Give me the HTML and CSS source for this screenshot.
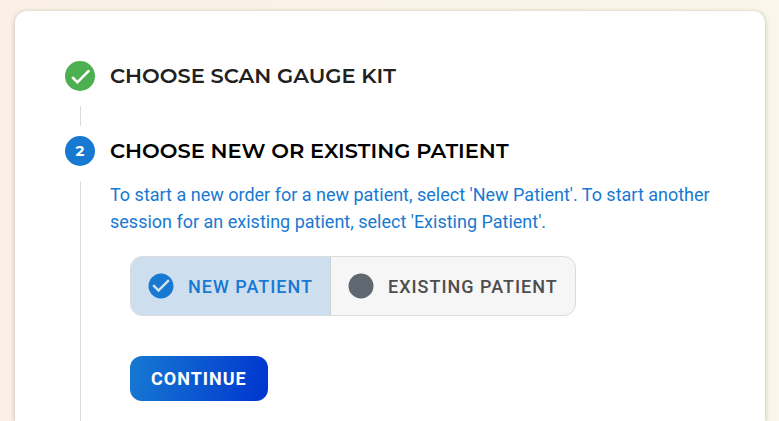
FILE: index.html
```html
<!DOCTYPE html>
<html lang="en">
<head>
    <meta charset="UTF-8">
    <meta name="viewport" content="width=device-width, initial-scale=1.0">
    <title>New Order</title>
    <link rel="stylesheet" href="styles.css">
</head>
<body>
    <main class="stepper">
        <div class="step">
            <span class="step-circle complete">
                <svg class="step-check" viewBox="0 0 24 24" aria-hidden="true">
                    <path d="M21,7L9,19L3.5,13.5L4.91,12.09L9,16.17L19.59,5.59L21,7Z"/>
                </svg>
            </span>
            <h2 class="step-title">CHOOSE SCAN GAUGE KIT</h2>
        </div>
        <div class="step-line"></div>

        <div class="step">
            <span class="step-circle">2</span>
            <h2 class="step-title active">CHOOSE NEW OR EXISTING PATIENT</h2>
        </div>
        <div class="step-content">
            <p class="hint">To start a new order for a new patient, select 'New Patient'. To start another session for an existing patient, select 'Existing Patient'.</p>
            <div class="actions">
                <div class="toggle" role="group" aria-label="Patient type">
                    <button type="button" class="toggle-btn selected" aria-pressed="true">
                        <svg class="toggle-icon" viewBox="0 0 24 24" aria-hidden="true">
                            <path d="M12 2C6.5 2 2 6.5 2 12S6.5 22 12 22 22 17.5 22 12 17.5 2 12 2M10 17L5 12L6.41 10.59L10 14.17L17.59 6.58L19 8L10 17Z"/>
                        </svg>
                        NEW PATIENT
                    </button>
                    <button type="button" class="toggle-btn" aria-pressed="false">
                        <svg class="toggle-icon" viewBox="0 0 24 24" aria-hidden="true">
                            <circle cx="12" cy="12" r="10"/>
                        </svg>
                        EXISTING PATIENT
                    </button>
                </div>
                <button type="button" class="continue-btn">CONTINUE</button>
            </div>
        </div>
    </main>
</body>
</html>
```
FILE: styles.css
```css
* {
    box-sizing: border-box;
}
body {
    margin: 0;
    padding: 11px 14px 0 15px;
    min-height: 100vh;
    font-family: Roboto, sans-serif;
    background: linear-gradient(90deg, #faf0e6, #faf6e9);
}
.stepper {
    padding: 50px 50px 0;
    background: white;
    border-radius: 12px 12px 0 0;
    box-shadow: 0 1px 5px rgba(0,0,0,0.25);
}
.step {
    display: flex;
    align-items: center;
    gap: 15px;
    height: 30px;
}
.step-circle {
    display: flex;
    align-items: center;
    justify-content: center;
    width: 30px;
    height: 30px;
    border-radius: 50%;
    background-color: #1779d2;
    color: white;
    font-family: Montserrat, Inter, sans-serif;
    font-size: 15px;
    font-weight: 700;
    line-height: 18px;
}
.step-circle.complete {
    background-color: #4caf50;
}
.step-check {
    width: 25px;
    height: 25px;
    fill: currentColor;
    stroke: currentColor;
    stroke-width: 0.6;
}
.step-title {
    margin: 0;
    font-family: Montserrat, Inter, sans-serif;
    font-size: 21px;
    font-weight: 600;
    line-height: 30px;
    color: #212121;
}
.step-title.active {
    color: black;
}
.step-line {
    height: 20px;
    margin: 15px 0 10px 15px;
    border-left: 1px solid #dcdcdc;
}
.step-content {
    margin: 15px 0 0 15px;
    padding: 0 0 20px 29px;
    border-left: 1px solid #dcdcdc;
}
.hint {
    margin: 0;
    font-size: 18px;
    line-height: 27px;
    color: #1779d2;
}
.actions {
    display: flex;
    flex-direction: column;
    align-items: flex-start;
    gap: 40px;
    padding: 21px 20px 0;
}
.toggle {
    display: flex;
    height: 60px;
    border: 1px solid #dcdcdc;
    border-radius: 12px;
    background-color: #f6f6f6;
    overflow: hidden;
}
.toggle-btn {
    display: flex;
    align-items: center;
    gap: 12px;
    padding: 0 17px 0 15px;
    border: none;
    background: none;
    color: #4d4d4d;
    font-family: inherit;
    font-size: 18px;
    font-weight: 500;
    letter-spacing: 1px;
    cursor: pointer;
}
.toggle-btn.selected {
    border-right: 1px solid #d0d4d8;
    background-color: #cddeee;
    color: #1779d2;
}
.toggle-icon {
    width: 30px;
    height: 30px;
    fill: #5f6770;
}
.selected .toggle-icon {
    fill: #1779d2;
}
.continue-btn {
    height: 45px;
    padding: 0 21px;
    border: none;
    border-radius: 12px;
    background: linear-gradient(100deg, #1779d2, #0035cf);
    color: white;
    font-family: inherit;
    font-size: 18px;
    font-weight: 700;
    letter-spacing: 1px;
    cursor: pointer;
}
```
